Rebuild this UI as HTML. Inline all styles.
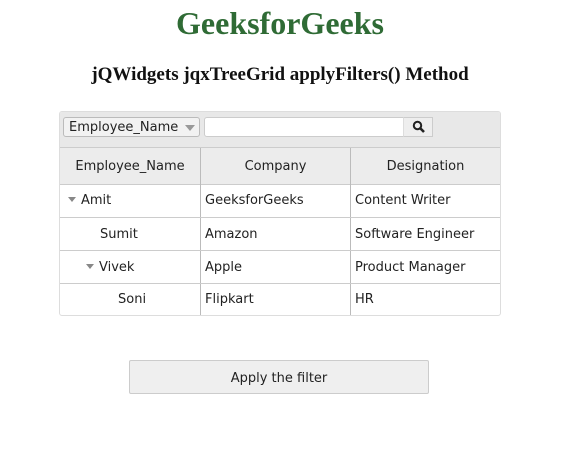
<!DOCTYPE html>
<html><head><style>
body{margin:0;width:572px;height:455px;background:#fff;position:relative;font-family:"DejaVu Sans","Liberation Sans",sans-serif;}
.a{position:absolute}
h1{position:absolute;top:5px;left:-6px;width:572px;margin:0;text-align:center;font:bold 32px "Liberation Serif",serif;color:#2f6b35}
h3{position:absolute;top:64px;left:-6px;width:572px;margin:0;text-align:center;font:bold 19px "Liberation Serif",serif;color:#111}
.g{left:59px;top:111px;width:440px;height:203px;border:1px solid #ddd;border-radius:3px;overflow:hidden}
.t{font-size:13px;color:#222;line-height:14px}
.cell{position:absolute;font-size:13px;color:#222;white-space:nowrap}
.tri{display:inline-block;width:0;height:0;border-left:4px solid transparent;border-right:4px solid transparent;border-top:5px solid #888;margin-right:5px;vertical-align:2px}
</style></head><body>
<h1>GeeksforGeeks</h1>
<h3>jQWidgets jqxTreeGrid applyFilters() Method</h3>
<div class="a g">
 <div class="a" style="left:0;top:0;width:440px;height:35px;background:#e8e8e8;border-bottom:1px solid #ccc"></div>
 <div class="a t" style="left:3px;top:5px;width:137px;height:20px;border:1px solid #bbb;border-radius:3px;background:#f2f2f2;padding:3px 0 0 5px;box-sizing:border-box">Employee_Name<span style="position:absolute;right:4px;top:7px;border-left:5px solid transparent;border-right:5px solid transparent;border-top:6px solid #999"></span></div>
 <div class="a" style="left:144px;top:5px;width:229px;height:20px;border:1px solid #ccc;border-radius:3px;background:#fff;box-sizing:border-box"></div>
 <div class="a" style="left:343px;top:5px;width:30px;height:20px;border:1px solid #ccc;border-left:1px solid #ddd;background:#eee;box-sizing:border-box">
  <svg width="14" height="14" style="position:absolute;left:8px;top:2px" viewBox="0 0 14 14"><circle cx="5.5" cy="5.5" r="3.7" fill="none" stroke="#222" stroke-width="2"/><path d="M8 8l4 4" stroke="#222" stroke-width="2.6"/></svg>
 </div>
 <div class="a" style="left:0;top:36px;width:440px;height:36px;background:#ececec;border-bottom:1px solid #ccc"></div>
 <div class="a" style="left:140px;top:36px;width:1px;height:167px;background:#bbb"></div>
 <div class="a" style="left:290px;top:36px;width:1px;height:167px;background:#bbb"></div>
 <div class="a" style="left:0;top:105px;width:440px;height:1px;background:#ccc"></div>
 <div class="a" style="left:0;top:138px;width:440px;height:1px;background:#ccc"></div>
 <div class="a" style="left:0;top:171px;width:440px;height:1px;background:#ccc"></div>
 <div class="cell" style="left:0;width:140px;text-align:center;top:47px">Employee_Name</div>
 <div class="cell" style="left:141px;width:149px;text-align:center;top:47px">Company</div>
 <div class="cell" style="left:291px;width:149px;text-align:center;top:47px">Designation</div>
 <div class="cell" style="left:8px;top:81px"><span class="tri"></span>Amit</div>
 <div class="cell" style="left:145px;top:81px">GeeksforGeeks</div>
 <div class="cell" style="left:295px;top:81px">Content Writer</div>
 <div class="cell" style="left:40px;top:115px">Sumit</div>
 <div class="cell" style="left:145px;top:115px">Amazon</div>
 <div class="cell" style="left:295px;top:115px">Software Engineer</div>
 <div class="cell" style="left:26px;top:148px"><span class="tri"></span>Vivek</div>
 <div class="cell" style="left:145px;top:148px">Apple</div>
 <div class="cell" style="left:295px;top:148px">Product Manager</div>
 <div class="cell" style="left:58px;top:180px">Soni</div>
 <div class="cell" style="left:145px;top:180px">Flipkart</div>
 <div class="cell" style="left:295px;top:180px">HR</div>
</div>
<div class="a cell" style="left:129px;top:360px;width:298px;height:32px;border:1px solid #ccc;border-radius:2px;background:#efefef;text-align:center;line-height:36px">Apply the filter</div>
</body></html>
